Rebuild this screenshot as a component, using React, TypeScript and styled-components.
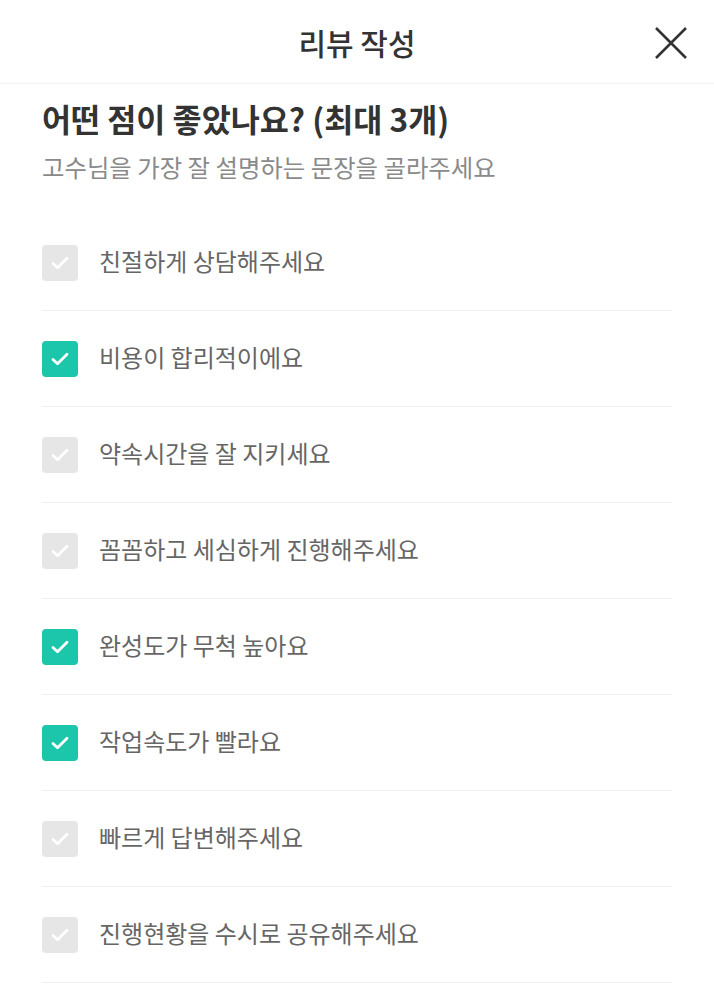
import { createGlobalStyle } from "styled-components";
import styled from "styled-components";

const GlobalStyle = createGlobalStyle`
  html, body {
    margin: 0;
    padding: 0;
    background: #fff;
  }
  body {
    font-family: "Noto Sans CJK KR", "Noto Sans", sans-serif;
    color: #333;
  }
`;

const Header = styled.header`
  position: relative;
  height: 83px;
  display: flex;
  align-items: center;
  justify-content: center;
  border-bottom: 1px solid #f3f3f3;
`;

const Title = styled.h1`
  margin: 0;
  font-size: 30px;
  font-weight: 500;
  color: #333;
`;

const CloseButton = styled.button`
  position: absolute;
  right: 26px;
  top: 26px;
  width: 34px;
  height: 34px;
  border: 0;
  padding: 0;
  background: transparent;
  cursor: pointer;
`;

const Content = styled.main`
  padding: 14px 42px 0;
`;

const Heading = styled.h2`
  margin: 0;
  font-size: 31.6px;
  line-height: 40px;
  font-weight: 700;
  color: #333;
`;

const Sub = styled.p`
  margin: 12px 0 0;
  font-size: 24.4px;
  line-height: 34px;
  color: #8a8a8a;
`;

const List = styled.ul`
  list-style: none;
  margin: 31px 0 0;
  padding: 0;
`;

const Item = styled.li`
  display: flex;
  align-items: center;
  gap: 21px;
  height: 95px;
  border-bottom: 1px solid #efefef;
`;

const Box = styled.span<{ checked: boolean }>`
  width: 36px;
  height: 36px;
  border-radius: 4px;
  flex: none;
  display: flex;
  align-items: center;
  justify-content: center;
  background: ${p => (p.checked ? "#1bc6aa" : "#e6e6e6")};
`;

const Label = styled.span`
  font-size: 24px;
  line-height: 30px;
  margin-top: -4px;
  color: #666;
`;

const options = [
  { text: "친절하게 상담해주세요", checked: false },
  { text: "비용이 합리적이에요", checked: true },
  { text: "약속시간을 잘 지키세요", checked: false },
  { text: "꼼꼼하고 세심하게 진행해주세요", checked: false },
  { text: "완성도가 무척 높아요", checked: true },
  { text: "작업속도가 빨라요", checked: true },
  { text: "빠르게 답변해주세요", checked: false },
  { text: "진행현황을 수시로 공유해주세요", checked: false },
];

function Check() {
  return (
    <svg width="22" height="22" viewBox="0 0 22 22" fill="none">
      <path d="M4 11.5l4.5 4.3 9.5-9.6" stroke="#fff" strokeWidth="2.8" strokeLinecap="round" strokeLinejoin="round" />
    </svg>
  );
}

export default function App() {
  return (
    <>
      <GlobalStyle />
      <Header>
        <Title>리뷰 작성</Title>
        <CloseButton aria-label="닫기">
          <svg width="34" height="34" viewBox="0 0 34 34">
            <path d="M2 2l30 30M32 2L2 32" stroke="#333" strokeWidth="2.6" />
          </svg>
        </CloseButton>
      </Header>
      <Content>
        <Heading>어떤 점이 좋았나요? (최대 3개)</Heading>
        <Sub>고수님을 가장 잘 설명하는 문장을 골라주세요</Sub>
        <List>
          {options.map(o => (
            <Item key={o.text}>
              <Box checked={o.checked}>
                <Check />
              </Box>
              <Label>{o.text}</Label>
            </Item>
          ))}
        </List>
      </Content>
    </>
  );
}
